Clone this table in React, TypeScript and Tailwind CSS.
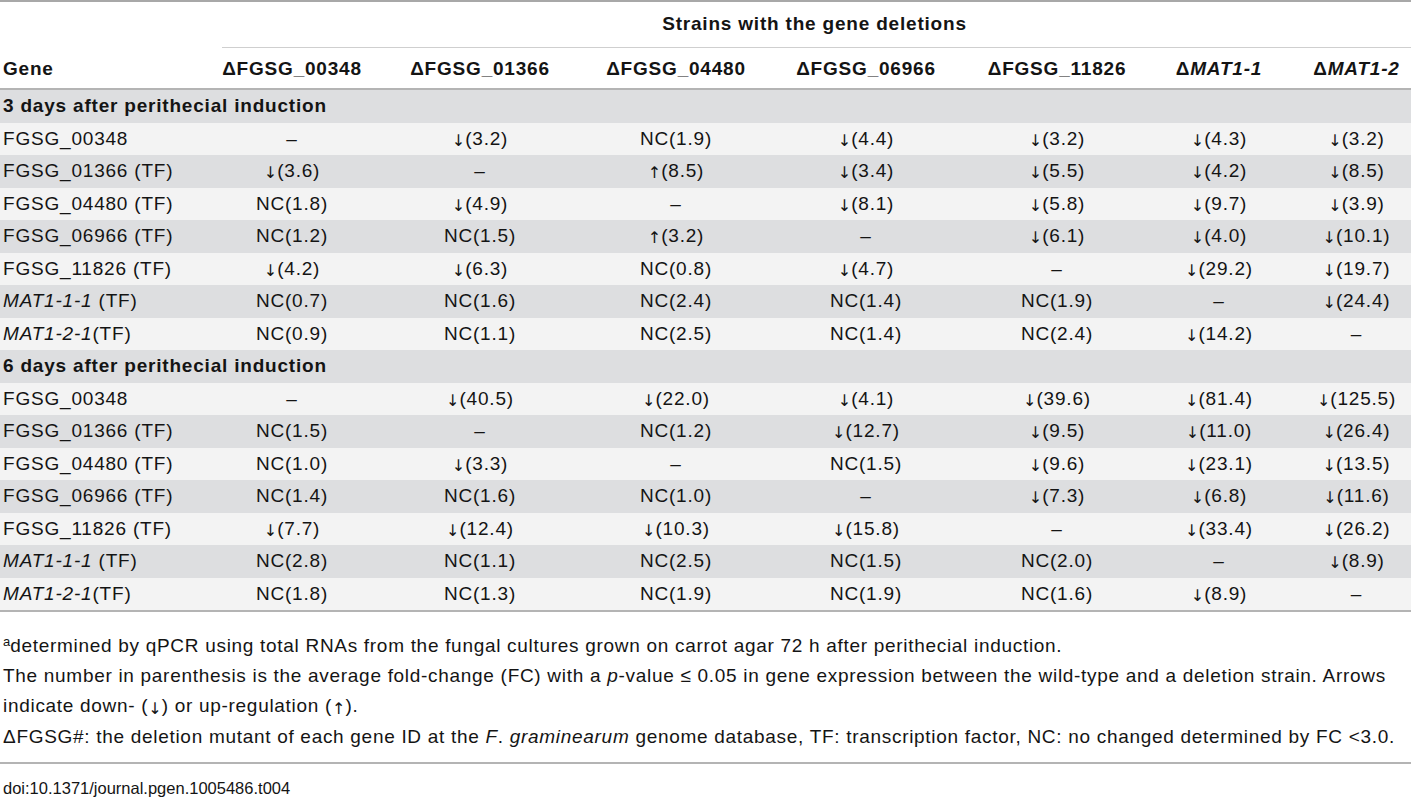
import React from "react";

type Row = {
  gene: React.ReactNode;
  values: string[];
};

type Section = {
  title: string;
  rows: Row[];
};

const cols = "grid grid-cols-[222px_140px_236px_156px_224px_158px_166px_109px]";

const mat111 = <><i>MAT1-1-1</i>{"\u00a0"}(TF)</>;
const mat121 = <><i>MAT1-2-1</i>(TF)</>;

const sections: Section[] = [
  {
    title: "3 days after perithecial induction",
    rows: [
      { gene: "FGSG_00348", values: ["–", "↓(3.2)", "NC(1.9)", "↓(4.4)", "↓(3.2)", "↓(4.3)", "↓(3.2)"] },
      { gene: "FGSG_01366 (TF)", values: ["↓(3.6)", "–", "↑(8.5)", "↓(3.4)", "↓(5.5)", "↓(4.2)", "↓(8.5)"] },
      { gene: "FGSG_04480 (TF)", values: ["NC(1.8)", "↓(4.9)", "–", "↓(8.1)", "↓(5.8)", "↓(9.7)", "↓(3.9)"] },
      { gene: "FGSG_06966 (TF)", values: ["NC(1.2)", "NC(1.5)", "↑(3.2)", "–", "↓(6.1)", "↓(4.0)", "↓(10.1)"] },
      { gene: "FGSG_11826 (TF)", values: ["↓(4.2)", "↓(6.3)", "NC(0.8)", "↓(4.7)", "–", "↓(29.2)", "↓(19.7)"] },
      { gene: mat111, values: ["NC(0.7)", "NC(1.6)", "NC(2.4)", "NC(1.4)", "NC(1.9)", "–", "↓(24.4)"] },
      { gene: mat121, values: ["NC(0.9)", "NC(1.1)", "NC(2.5)", "NC(1.4)", "NC(2.4)", "↓(14.2)", "–"] },
    ],
  },
  {
    title: "6 days after perithecial induction",
    rows: [
      { gene: "FGSG_00348", values: ["–", "↓(40.5)", "↓(22.0)", "↓(4.1)", "↓(39.6)", "↓(81.4)", "↓(125.5)"] },
      { gene: "FGSG_01366 (TF)", values: ["NC(1.5)", "–", "NC(1.2)", "↓(12.7)", "↓(9.5)", "↓(11.0)", "↓(26.4)"] },
      { gene: "FGSG_04480 (TF)", values: ["NC(1.0)", "↓(3.3)", "–", "NC(1.5)", "↓(9.6)", "↓(23.1)", "↓(13.5)"] },
      { gene: "FGSG_06966 (TF)", values: ["NC(1.4)", "NC(1.6)", "NC(1.0)", "–", "↓(7.3)", "↓(6.8)", "↓(11.6)"] },
      { gene: "FGSG_11826 (TF)", values: ["↓(7.7)", "↓(12.4)", "↓(10.3)", "↓(15.8)", "–", "↓(33.4)", "↓(26.2)"] },
      { gene: mat111, values: ["NC(2.8)", "NC(1.1)", "NC(2.5)", "NC(1.5)", "NC(2.0)", "–", "↓(8.9)"] },
      { gene: mat121, values: ["NC(1.8)", "NC(1.3)", "NC(1.9)", "NC(1.9)", "NC(1.6)", "↓(8.9)", "–"] },
    ],
  },
];

const strains: React.ReactNode[] = [
  "ΔFGSG_00348",
  "ΔFGSG_01366",
  "ΔFGSG_04480",
  "ΔFGSG_06966",
  "ΔFGSG_11826",
  <>Δ<i>MAT1-1</i></>,
  <>Δ<i>MAT1-2</i></>,
];

// arrows are not in Liberation Sans, take them from DejaVu so they stay black
const Arrow = ({ up }: { up?: boolean }) => (
  <span className="font-['DejaVu_Sans'] font-normal text-[16px] tracking-normal relative top-[2px]">
    {up ? "\u2191\uFE0E" : "\u2193\uFE0E"}
  </span>
);

const Value = ({ v }: { v: string }) => {
  if (v.startsWith("↓")) return <><Arrow />{v.slice(1)}</>;
  if (v.startsWith("↑")) return <><Arrow up />{v.slice(1)}</>;
  return <>{v}</>;
};

const App = () => {
  let stripe = 0;

  return (
    <div className="w-[1411px] h-[800px] bg-white text-[#141414] font-['Liberation_Sans','DejaVu_Sans',Arial,sans-serif] overflow-hidden">
      <div className="border-t-2 border-[#a8a8a8]">
        {/* header */}
        <div className={`${cols} text-[19px] tracking-[0.8px] font-bold`}>
          <div className="h-[45px]"></div>
          <div className="col-span-7 h-[46px] flex items-center justify-center border-b border-[#cfcfcf] pr-[4px]">
            Strains with the gene deletions
          </div>
          <div className="h-[40px] flex items-center pl-[3px] pt-[2px]">Gene</div>
          {strains.map((s, i) => (
            <div key={i} className="h-[40px] flex items-center justify-center whitespace-nowrap pt-[2px]">
              {s}
            </div>
          ))}
        </div>

        <div className="border-t-2 border-b-2 border-[#b4b4b4]">
          {sections.map((section) => {
            const sectionBg = stripe++ % 2 == 0 ? "bg-[#dddee0]" : "bg-[#f3f3f3]";
            return (
              <div key={section.title}>
                <div className={`h-[32.5px] flex items-center pl-[3px] text-[19px] tracking-[0.8px] font-bold ${sectionBg}`}>
                  {section.title}
                </div>
                {section.rows.map((row, index) => {
                  const bg = stripe++ % 2 == 0 ? "bg-[#dddee0]" : "bg-[#f3f3f3]";
                  return (
                    <div key={index} className={`${cols} h-[32.5px] text-[19px] tracking-[0.8px] ${bg}`}>
                      <div className="flex items-center pl-[3px] whitespace-nowrap">{row.gene}</div>
                      {row.values.map((v, j) => (
                        <div key={j} className="flex items-center justify-center whitespace-nowrap">
                          <Value v={v} />
                        </div>
                      ))}
                    </div>
                  );
                })}
              </div>
            );
          })}
        </div>
      </div>

      {/* footnotes */}
      <div className="pt-[19px] pb-[10px] pl-[3px] pr-[2px] text-[19px] tracking-[0.7px] leading-[30px] border-b-2 border-[#b4b4b4]">
        <p><sup className="text-[13px] tracking-normal">a</sup>determined by qPCR using total RNAs from the fungal cultures grown on carrot agar 72 h after perithecial induction.</p>
        <p>
          The number in parenthesis is the average fold-change (FC) with a <i>p</i>-value ≤ 0.05 in gene expression between the wild-type and a deletion strain. Arrows indicate down- (<Arrow />) or up-regulation (<Arrow up />).
        </p>
        <p>
          ΔFGSG#: the deletion mutant of each gene ID at the <i>F</i>. <i>graminearum</i> genome database, TF: transcription factor, NC: no changed determined by FC &lt;3.0.
        </p>
      </div>
      <div className="pt-[9px] pl-[3px] text-[16.5px] leading-[30px]">doi:10.1371/journal.pgen.1005486.t004</div>
    </div>
  );
};

export default App;
